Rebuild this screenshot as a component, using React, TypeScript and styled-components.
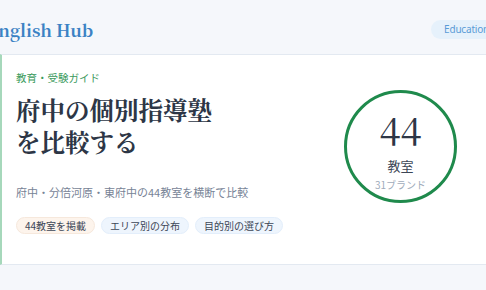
import React from 'react';
import styled, { createGlobalStyle } from 'styled-components';

const GlobalStyle = createGlobalStyle`
  html, body {
    margin: 0;
    padding: 0;
    background: #f5f7fb;
    overflow: hidden;
  }
  body {
    font-family: "Noto Sans CJK JP", "Noto Sans", sans-serif;
  }
`;

const serif = `"Noto Serif CJK JP", "Noto Serif JP", "Liberation Serif", "Noto Sans CJK JP", serif`;

const Page = styled.div`
  width: 486px;
  height: 290px;
  overflow: hidden;
  background: #f5f7fb;
`;

const Header = styled.header`
  height: 54px;
  display: flex;
  align-items: center;
  justify-content: space-between;
  margin-left: -13px;
  margin-right: -16px;
  padding-top: 4px;
  box-sizing: border-box;
`;

const Brand = styled.div`
  font-family: ${serif};
  font-weight: 700;
  font-size: 17px;
  color: #3b82c4;
`;

const Pill = styled.span`
  background: #e6f1fb;
  color: #5a9bd6;
  font-family: "Noto Sans", sans-serif;
  font-size: 10px;
  letter-spacing: -0.2px;
  padding: 3px 13px;
  border-radius: 999px;
  line-height: 13px;
`;

const Card = styled.section`
  background: #ffffff;
  border-top: 1px solid #e3e9f1;
  border-bottom: 1px solid #e3e9f1;
  border-left: 2px solid #a6d8bb;
  height: 211px;
  box-sizing: border-box;
  display: flex;
  justify-content: space-between;
  padding: 16px 29px 0 14px;
`;

const Main = styled.div`
  display: flex;
  flex-direction: column;
  align-items: flex-start;
`;

const Eyebrow = styled.div`
  color: #3a9a5c;
  font-size: 10.5px;
  line-height: 14px;
`;

const Title = styled.h1`
  margin: 9px 0 0;
  font-family: ${serif};
  font-weight: 700;
  font-size: 24.5px;
  line-height: 32px;
  color: #2d3646;
`;

const Lead = styled.p`
  margin: 26px 0 0;
  font-size: 11px;
  line-height: 16px;
  color: #778396;
`;

const Tags = styled.div`
  display: flex;
  gap: 6px;
  margin-top: 17px;
`;

const Tag = styled.span<{ $warm?: boolean }>`
  font-size: 10px;
  line-height: 15px;
  padding: 0 8px;
  border-radius: 999px;
  color: #3c4656;
  background: ${p => (p.$warm ? '#fdf4ec' : '#eef5fd')};
  border: 1px solid ${p => (p.$warm ? '#f6e8dc' : '#e3eefb')};
`;

const Ring = styled.div`
  margin-top: 19px;
  width: 113px;
  height: 113px;
  box-sizing: border-box;
  border: 3px solid #1f8a4c;
  border-radius: 50%;
  display: flex;
  flex-direction: column;
  align-items: center;
  justify-content: center;
  padding-top: 6px;
`;

const Count = styled.div`
  font-family: ${serif};
  font-size: 38px;
  line-height: 40px;
  color: #2d3646;
`;

const Unit = styled.div`
  font-size: 13px;
  line-height: 16px;
  color: #3c4656;
  margin-top: 9px;
`;

const Sub = styled.div`
  font-size: 10px;
  line-height: 13px;
  color: #a0abbb;
  margin-top: 4px;
`;

export default function App() {
  return (
    <Page>
      <GlobalStyle />
      <Header>
        <Brand>English Hub</Brand>
        <Pill>Education</Pill>
      </Header>
      <Card>
        <Main>
          <Eyebrow>教育・受験ガイド</Eyebrow>
          <Title>
            府中の個別指導塾
            <br />
            を比較する
          </Title>
          <Lead>府中・分倍河原・東府中の44教室を横断で比較</Lead>
          <Tags>
            <Tag $warm>44教室を掲載</Tag>
            <Tag>エリア別の分布</Tag>
            <Tag>目的別の選び方</Tag>
          </Tags>
        </Main>
        <Ring>
          <Count>44</Count>
          <Unit>教室</Unit>
          <Sub>31ブランド</Sub>
        </Ring>
      </Card>
    </Page>
  );
}
